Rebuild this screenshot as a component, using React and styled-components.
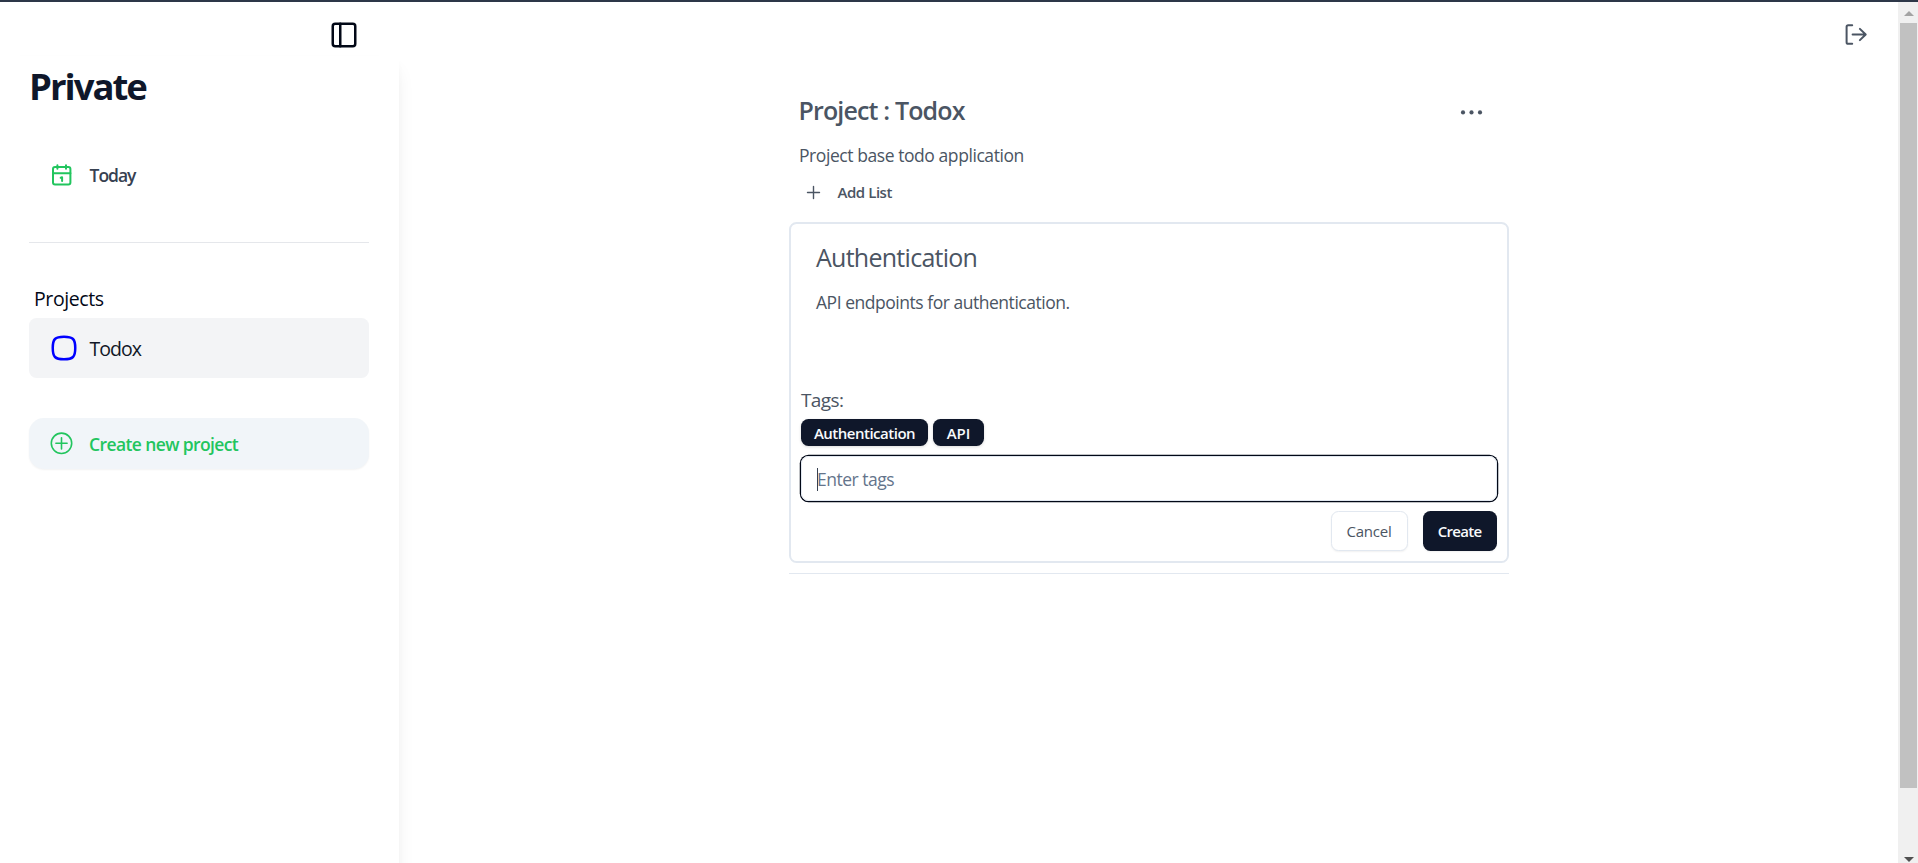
import React from "react";
import styled, { createGlobalStyle } from "styled-components";
import { PanelLeft, Squircle } from "lucide-react";

const Global = createGlobalStyle`
  * { box-sizing: border-box; }
  body { margin: 0; background: #fff; overflow: hidden; font-family: "Open Sans", "Noto Sans", sans-serif; color: #020817; }
  h1, h2, h3, p { margin: 0; }
  button { font-family: inherit; padding: 0; border: 0; background: none; cursor: pointer; }
  svg { display: block; flex: none; }
`;

const Window = styled.div`
  display: flex;
  width: 100%;
  height: 100vh;
  border-top: 2px solid #2d3748;
  overflow: hidden;
`;

const Page = styled.div`
  flex: 1;
  min-width: 0;
  display: flex;
  flex-direction: column;
`;

const TopBar = styled.header`
  display: flex;
  justify-content: space-between;
  align-items: flex-start;
  height: 54px;
  padding: 18px 30px 0 329px;
`;

const IconButton = styled.button`
  display: flex;
  color: ${(p) => p.$color};
`;

const Body = styled.div`
  flex: 1;
  display: flex;
  min-height: 0;
`;

const Sidebar = styled.aside`
  width: 399px;
  height: 900px;
  flex: none;
  display: flex;
  flex-direction: column;
  padding: 7px 30px 0 29px;
  box-shadow: 0 12px 19px -4px rgba(0, 0, 0, 0.09), 0 5px 8px -2px rgba(0, 0, 0, 0.03);
`;

const SidebarTitle = styled.h1`
  font-size: 36.5px;
  line-height: 46px;
  font-weight: 700;
  letter-spacing: -2px;
  color: #0f172a;
`;

const NavItem = styled.div`
  display: flex;
  align-items: center;
  height: 49px;
  margin-top: 41px;
  padding-left: 22px;
  font-size: 17.5px;
  font-weight: 600;
  letter-spacing: -1px;
  color: #374151;
`;

const IconSlot = styled.span`
  display: flex;
  width: 38.5px;
`;

const SidebarRule = styled.div`
  height: 1px;
  margin-top: 43px;
  background: #e5e7eb;
`;

const SectionLabel = styled.p`
  margin: 41px 0 4px;
  padding-left: 5px;
  font-size: 19.5px;
  line-height: 30px;
  letter-spacing: -0.4px;
`;

const ProjectItem = styled.div`
  display: flex;
  align-items: center;
  height: 60px;
  padding-left: 20px;
  border-radius: 7.5px;
  background: #f3f4f6;
  font-size: 19.5px;
  letter-spacing: -0.95px;
  color: #111827;

  ${IconSlot} { width: 40.5px; padding-bottom: 1px; }
`;

const CreateProject = styled.button`
  display: flex;
  align-items: center;
  height: 51px;
  margin-top: 40px;
  padding-left: 21px;
  border-radius: 15px;
  background: #f1f5f9;
  box-shadow: 0 1px 2px rgba(0, 0, 0, 0.05);
  font-size: 17.5px;
  font-weight: 600;
  letter-spacing: -0.61px;
  color: #22c55e;

  ${IconSlot} { width: 39px; }
`;

const Main = styled.main`
  flex: 1;
  padding: 34px 0 0 390px;
  color: #4b5563;
`;

const Project = styled.section`
  width: 720px;
  display: flex;
  flex-direction: column;
`;

const ProjectHeader = styled.div`
  display: flex;
  justify-content: space-between;
  align-items: center;
  height: 40px;
  padding: 0 24px 0 9.5px;
`;

const ProjectTitle = styled.h2`
  font-size: 25px;
  line-height: 40px;
  font-weight: 600;
  letter-spacing: -0.85px;
`;

const ProjectText = styled.p`
  margin-top: 10px;
  padding-left: 10px;
  font-size: 17.5px;
  line-height: 30px;
  letter-spacing: -0.43px;
`;

const AddList = styled.button`
  display: flex;
  align-items: center;
  gap: 15.5px;
  height: 30px;
  margin: 7px 0 15px;
  padding-left: 16px;
  font-size: 15px;
  font-weight: 600;
  letter-spacing: -0.45px;
  color: #4b5563;
`;

const Card = styled.div`
  height: 341px;
  display: flex;
  flex-direction: column;
  padding: 13px 10px 10px;
  border: 2px solid #e2e8f0;
  border-radius: 7.5px;
`;

const CardTitle = styled.h3`
  padding-left: 15px;
  font-size: 25px;
  line-height: 40px;
  font-weight: 400;
  letter-spacing: -0.73px;
`;

const CardText = styled.p`
  height: 98px;
  margin-top: 10px;
  padding-left: 15px;
  font-size: 17.5px;
  line-height: 30px;
  letter-spacing: -0.47px;
`;

const TagsLabel = styled.p`
  font-size: 19px;
  line-height: 30px;
  letter-spacing: -0.6px;
`;

const TagRow = styled.div`
  display: flex;
  gap: 5px;
  margin: 4px 0 10px;
`;

const Tag = styled.span`
  display: flex;
  align-items: center;
  justify-content: center;
  width: ${(p) => p.$width}px;
  height: 27px;
  border-radius: 7.5px;
  background: #0f172a;
  box-shadow: 0 1px 3px rgba(0, 0, 0, 0.15);
  color: #f8fafc;
  font-size: 15px;
  font-weight: 600;
  letter-spacing: ${(p) => p.$spacing}px;
`;

const TagInput = styled.div`
  display: flex;
  align-items: center;
  height: 45px;
  padding: 1px 0 0 15px;
  border: 1px solid #e2e8f0;
  border-radius: 7.5px;
  box-shadow: 0 0 0 1.25px #020817;
  font-size: 17.5px;
  letter-spacing: -0.5px;
  color: #64748b;
`;

const Caret = styled.span`
  width: 1px;
  height: 23px;
  margin-right: -1px;
  background: #374151;
`;

const Actions = styled.div`
  display: flex;
  justify-content: flex-end;
  gap: 15px;
  margin-top: 10px;
`;

const Button = styled.button`
  width: ${(p) => (p.$primary ? 74 : 77)}px;
  height: 40px;
  padding-right: 1px;
  border: ${(p) => (p.$primary ? "0" : "1px solid #e2e8f0")};
  border-radius: 7.5px;
  background: ${(p) => (p.$primary ? "#0f172a" : "#fff")};
  box-shadow: 0 1px 2px rgba(0, 0, 0, 0.06);
  color: ${(p) => (p.$primary ? "#f8fafc" : "#4b5563")};
  font-size: 15px;
  font-weight: ${(p) => (p.$primary ? 600 : 500)};
  letter-spacing: ${(p) => (p.$primary ? -0.7 : -0.25)}px;
`;

const ListRule = styled.div`
  height: 1px;
  margin-top: 10px;
  background: #e2e8f0;
`;

const Scrollbar = styled.div`
  flex: none;
  width: 20px;
  display: flex;
  flex-direction: column;
  padding: 9px 1px 1px 2px;
  background: #f0f0f0;
`;

const Arrow = styled.svg`
  align-self: center;
`;

const Thumb = styled.div`
  height: 765px;
  margin: 7px 0 auto;
  background: #c1c1c1;
`;

const CalendarIcon = () => (
  <svg width="22" height="24" viewBox="0 0 22 24" fill="none" stroke="#22c55e" strokeWidth="2" strokeLinecap="round" strokeLinejoin="round">
    <rect x="2" y="4" width="17.4" height="17.4" rx="2" />
    <path d="M2 10.3h17.4M6.4 2.2v3.6M15 2.2v3.6M9.7 14.8l1.4-.5v3.6" />
  </svg>
);

const CirclePlusIcon = () => (
  <svg width="23" height="23" viewBox="0 0 23 23" fill="none" stroke="currentColor" strokeWidth="1.6" strokeLinecap="round">
    <circle cx="11.5" cy="11.3" r="10.2" />
    <path d="M5.9 11.3h11.2M11.5 5.7v11.2" />
  </svg>
);

const PlusIcon = () => (
  <svg width="17" height="17" viewBox="0 0 17 17" fill="none" stroke="currentColor" strokeWidth="1.4" strokeLinecap="round">
    <path d="M2.5 8.5h12M8.5 2.5v12" />
  </svg>
);

const DotsIcon = () => (
  <svg width="26" height="10" viewBox="0 0 26 10" fill="#4b5563">
    <circle cx="4" cy="7.4" r="2.1" />
    <circle cx="12.5" cy="7.4" r="2.1" />
    <circle cx="21" cy="7.4" r="2.1" />
  </svg>
);

const LogoutIcon = () => (
  <svg width="24" height="26" viewBox="0 0 24 26" fill="none" stroke="currentColor" strokeWidth="2" strokeLinecap="round" strokeLinejoin="round">
    <path d="M8.2 5.2H4.2Q2.6 5.2 2.6 6.8v15.4q0 1.6 1.6 1.6h4" />
    <path d="M8.6 14.5h13M15.9 8.9l5.8 5.6-5.8 5.6" />
  </svg>
);

export default function App() {
  return (
    <Window>
      <Global />
      <Page>
        <TopBar>
          <IconButton $color="#020817" aria-label="Toggle sidebar"><PanelLeft size={30} /></IconButton>
          <IconButton $color="#4b5563" aria-label="Log out"><LogoutIcon /></IconButton>
        </TopBar>
        <Body>
          <Sidebar>
            <SidebarTitle>Private</SidebarTitle>
            <NavItem><IconSlot><CalendarIcon /></IconSlot>Today</NavItem>
            <SidebarRule />
            <SectionLabel>Projects</SectionLabel>
            <ProjectItem><IconSlot><Squircle size={30} color="#0000ff" /></IconSlot>Todox</ProjectItem>
            <CreateProject><IconSlot><CirclePlusIcon /></IconSlot>Create new project</CreateProject>
          </Sidebar>
          <Main>
            <Project>
              <ProjectHeader>
                <ProjectTitle>Project : Todox</ProjectTitle>
                <DotsIcon />
              </ProjectHeader>
              <ProjectText>Project base todo application</ProjectText>
              <AddList><PlusIcon />Add List</AddList>
              <Card>
                <CardTitle>Authentication</CardTitle>
                <CardText>API endpoints for authentication.</CardText>
                <TagsLabel>Tags:</TagsLabel>
                <TagRow>
                  <Tag $width={127} $spacing={-0.5}>Authentication</Tag>
                  <Tag $width={51} $spacing={0}>API</Tag>
                </TagRow>
                <TagInput><Caret />Enter tags</TagInput>
                <Actions>
                  <Button>Cancel</Button>
                  <Button $primary>Create</Button>
                </Actions>
              </Card>
              <ListRule />
            </Project>
          </Main>
        </Body>
      </Page>
      <Scrollbar>
        <Arrow width="10" height="5" viewBox="0 0 10 5"><path d="M0 5L5 0l5 5z" fill="#a3a3a3" /></Arrow>
        <Thumb />
        <Arrow width="10" height="5" viewBox="0 0 10 5"><path d="M0 0h10L5 5z" fill="#505050" /></Arrow>
      </Scrollbar>
    </Window>
  );
}
